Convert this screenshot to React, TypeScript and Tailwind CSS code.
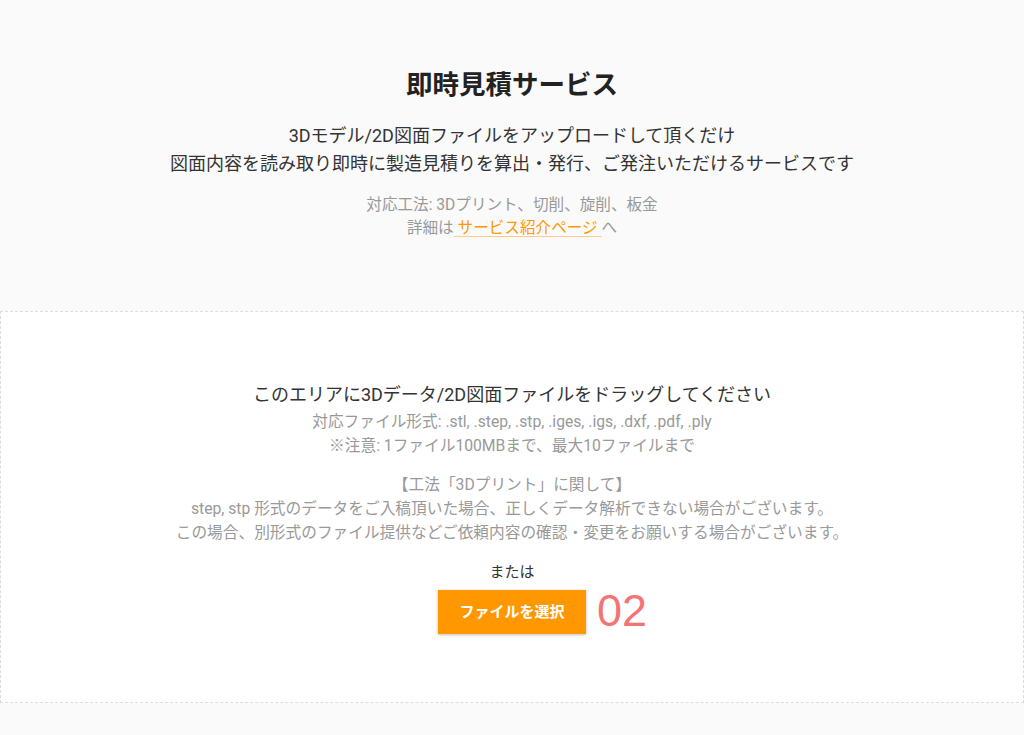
import React from "react";

const FONT = "font-['Roboto','Noto_Sans_CJK_JP',sans-serif]";

export default function App() {
  return (
    <div className={`min-h-screen bg-[#fafafa] text-[#333] ${FONT}`}>
      {/* Intro */}
      <section className="h-[311px] pt-[67px] text-center">
        <h1 className="text-[26.5px] font-bold leading-[36px] text-[#222]">即時見積サービス</h1>
        <p className="mt-[19px] text-[18px] leading-[28px]">
          3Dモデル/2D図面ファイルをアップロードして頂くだけ
          <br />
          図面内容を読み取り即時に製造見積りを算出・発行、ご発注いただけるサービスです
        </p>
        <p className="mt-[16px] text-[15.6px] leading-[23px] text-[#999]">
          対応工法: 3Dプリント、切削、旋削、板金
          <br />
          詳細は
          <a href="#" className="text-[#ff9800] underline decoration-[#ffc98a] underline-offset-[3px]">
            {" "}サービス紹介ページ{" "}
          </a>
          へ
        </p>
      </section>

      {/* Drop area */}
      <section className="h-[392px] border border-dashed border-[#ddd] bg-white pt-[69px] text-center">
        <p className="text-[18px] leading-[28px]">このエリアに3Dデータ/2D図面ファイルをドラッグしてください</p>
        <p className="mt-px text-[15.7px] leading-[24px] text-[#999]">
          対応ファイル形式: .stl, .step, .stp, .iges, .igs, .dxf, .pdf, .ply
          <br />
          ※注意: 1ファイル100MBまで、最大10ファイルまで
        </p>
        <p className="mt-[15px] text-[15.7px] leading-[24px] text-[#999]">
          【工法「3Dプリント」に関して】
          <br />
          step, stp 形式のデータをご入稿頂いた場合、正しくデータ解析できない場合がございます。
          <br />
          この場合、別形式のファイル提供などご依頼内容の確認・変更をお願いする場合がございます。
        </p>
        <p className="mt-[15px] text-[15px] leading-[24px]">または</p>
        <div className="mt-[6px] flex justify-center">
          <div className="relative">
            <button className="h-[44px] w-[148px] bg-[#ff9800] text-[15px] font-bold text-white shadow-[0_1px_3px_rgba(0,0,0,0.25)]">
              ファイルを選択
            </button>
            <span className="absolute left-[159px] top-[-1px] font-['Liberation_Sans',sans-serif] text-[45px] leading-[44px] text-[#f27474]">
              02
            </span>
          </div>
        </div>
      </section>
    </div>
  );
}
